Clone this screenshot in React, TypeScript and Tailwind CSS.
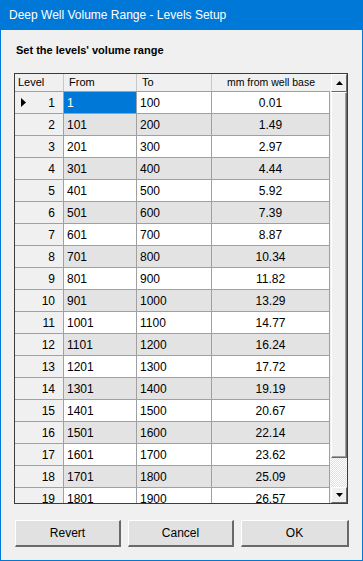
import React from "react";

const rows = [
  ["1", "100", "0.01"],
  ["101", "200", "1.49"],
  ["201", "300", "2.97"],
  ["301", "400", "4.44"],
  ["401", "500", "5.92"],
  ["501", "600", "7.39"],
  ["601", "700", "8.87"],
  ["701", "800", "10.34"],
  ["801", "900", "11.82"],
  ["901", "1000", "13.29"],
  ["1001", "1100", "14.77"],
  ["1101", "1200", "16.24"],
  ["1201", "1300", "17.72"],
  ["1301", "1400", "19.19"],
  ["1401", "1500", "20.67"],
  ["1501", "1600", "22.14"],
  ["1601", "1700", "23.62"],
  ["1701", "1800", "25.09"],
  ["1801", "1900", "26.57"],
];

function Arrow({ dir }: { dir: "up" | "down" }) {
  return (
    <svg width="7" height="4" viewBox="0 0 7 4">
      {dir === "up" ? <path d="M0 4 L3.5 0 L7 4 Z" fill="#000" /> : <path d="M0 0 L3.5 4 L7 0 Z" fill="#000" />}
    </svg>
  );
}

export default function App() {
  return (
    <div
      className="w-[363px] h-[561px] flex flex-col bg-[#f0f0f0] text-black"
      style={{ fontFamily: '"Liberation Sans", Arial, sans-serif' }}
    >
      {/* Title bar */}
      <div className="h-[30px] shrink-0 bg-[#0078d7] flex items-center pl-[9px] text-white text-[12px]">
        Deep Well Volume Range - Levels Setup
      </div>

      <div className="flex-1 flex flex-col border-x border-b border-[#0078d7] pl-[13px] pr-[13px]">
        <div className="mt-[13px] h-[14px] leading-[14px] pl-[2px] text-[11px] font-bold">
          Set the levels' volume range
        </div>

        {/* Grid */}
        <div className="mt-[16px] h-[431px] w-[334px] border border-[#3c3c3c] flex bg-[#f0f0f0]">
          <div className="w-[315px] overflow-hidden flex flex-col text-[11px]">
            {/* Header */}
            <div className="h-[18px] shrink-0 flex border-b border-[#a0a0a0] bg-[#f0f0f0]">
              <div className="w-[49px] border-r border-[#c8c8c8] pl-[3px] leading-[17px]">Level</div>
              <div className="w-[73px] border-r border-[#c8c8c8] pl-[5px] leading-[17px]">From</div>
              <div className="w-[75px] border-r border-[#c8c8c8] pl-[5px] leading-[17px]">To</div>
              <div className="w-[118px] text-center leading-[17px] text-[10.5px]">mm from well base</div>
            </div>
            {rows.map((r, i) => {
              const shade = i % 2 === 1 ? "bg-[#e3e3e3]" : "bg-white";
              return (
                <div key={i} className="h-[22px] shrink-0 flex">
                  <div className="w-[49px] shrink-0 flex items-center justify-between pl-[6px] pr-[8px] bg-[#f0f0f0] border-r border-b border-[#a0a0a0] text-[12px]">
                    <span className="w-[6px] flex items-center">
                      {i === 0 && (
                        <svg width="5" height="9" viewBox="0 0 5 9">
                          <path d="M0 0 L5 4.5 L0 9 Z" fill="#000" />
                        </svg>
                      )}
                    </span>
                    <span>{i + 1}</span>
                  </div>
                  <div
                    className={`w-[73px] shrink-0 flex items-center pl-[3px] border-r border-b border-[#a0a0a0] text-[12px] ${
                      i === 0 ? "bg-[#0078d7] text-white" : shade
                    }`}
                  >
                    {r[0]}
                  </div>
                  <div className={`w-[75px] shrink-0 flex items-center pl-[3px] border-r border-b border-[#a0a0a0] text-[12px] ${shade}`}>
                    {r[1]}
                  </div>
                  <div className={`w-[118px] shrink-0 flex items-center justify-center border-r border-b border-[#a0a0a0] text-[12px] ${shade}`}>
                    {r[2]}
                  </div>
                </div>
              );
            })}
          </div>

          {/* Scrollbar */}
          <div className="w-[17px] flex flex-col border-l border-[#f0f0f0]">
            <div className="h-[18px] shrink-0 flex items-center justify-center bg-[#f0f0f0] border-t border-l border-white border-r border-b border-r-[#696969] border-b-[#696969]">
              <Arrow dir="up" />
            </div>
            <div className="h-[366px] shrink-0 bg-[#f0f0f0] border-t border-l border-white border-r border-b border-r-[#696969] border-b-[#696969] shadow-[inset_-1px_-1px_0_#a0a0a0]" />
            <div className="flex-1 bg-[repeating-conic-gradient(#ffffff_0_25%,#e0e0e0_0_50%)] bg-[length:2px_2px]" />
            <div className="h-[16px] shrink-0 flex items-center justify-center bg-[#f0f0f0] border-t border-l border-white border-r border-b border-r-[#696969] border-b-[#696969]">
              <Arrow dir="down" />
            </div>
          </div>
        </div>

        {/* Buttons */}
        <div className="mt-[16px] flex gap-[7px] pl-[1px] text-[12px]">
          {["Revert", "Cancel", "OK"].map((b, i) => (
            <button
              key={b}
              className={`h-[27px] ${i === 2 ? "w-[108px]" : "w-[106px]"} bg-[#e1e1e1] border-t border-l border-r-2 border-b-2 border-t-white border-l-white border-r-[#696969] border-b-[#696969] flex items-center justify-center`}
            >
              {b}
            </button>
          ))}
        </div>
      </div>
    </div>
  );
}
